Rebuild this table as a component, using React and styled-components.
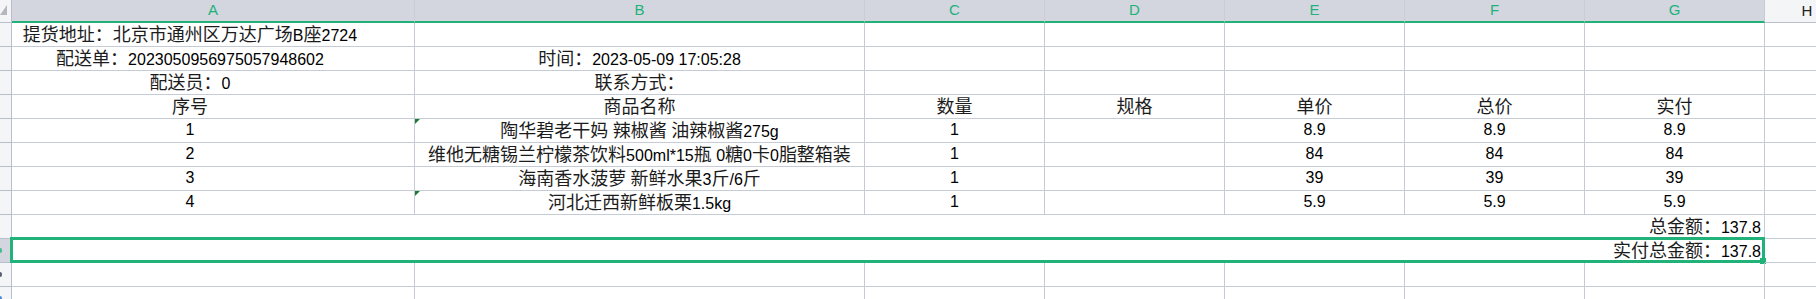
import React from 'react';
import styled, { createGlobalStyle, css } from 'styled-components';

const GlobalStyle = createGlobalStyle`
  html, body {
    margin: 0;
    padding: 0;
    background: #ffffff;
    overflow: hidden;
  }
  body {
    font-family: 'Liberation Sans', 'Noto Sans CJK SC', sans-serif;
    color: #000;
  }
`;

const GRID = '#c6cbd8';
const GREEN = '#21b27a';
const SELECT_BG = '#d3d6de';
const SIDE_BG = '#f4f5f7';

const letters = ['A', 'B', 'C', 'D', 'E', 'F', 'G', 'H'];

const info = [
  ['提货地址：北京市通州区万达广场B座2724', ''],
  ['配送单：2023050956975057948602', '时间：2023-05-09 17:05:28'],
  ['配送员：0', '联系方式：'],
];

const head = ['序号', '商品名称', '数量', '规格', '单价', '总价', '实付'];

const items = [
  { no: '1', name: '陶华碧老干妈 辣椒酱 油辣椒酱275g', qty: '1', spec: '', price: '8.9', total: '8.9', paid: '8.9', flag: true },
  { no: '2', name: '维他无糖锡兰柠檬茶饮料500ml*15瓶 0糖0卡0脂整箱装', qty: '1', spec: '', price: '84', total: '84', paid: '84' },
  { no: '3', name: '海南香水菠萝 新鲜水果3斤/6斤', qty: '1', spec: '', price: '39', total: '39', paid: '39' },
  { no: '4', name: '河北迁西新鲜板栗1.5kg', qty: '1', spec: '', price: '5.9', total: '5.9', paid: '5.9', flag: true },
];

// CJK runs get their own size so they sit like the sheet's Song font next to the Latin digits
const HAN_RE = /([\u3000-\u303f\u4e00-\u9fff\uff00-\uffef]+)/;

const Mixed = ({ text }) => (
  <Text>
    {text
      .split(HAN_RE)
      .filter(Boolean)
      .map((part, i) => (HAN_RE.test(part) ? <Han key={i}>{part}</Han> : <span key={i}>{part}</span>))}
  </Text>
);

const Cells = ({ values, flagB }) =>
  values.map((v, i) => (
    <Cell key={i} $first={i === 0}>
      {i === 1 && flagB && <Flag />}
      {v && <Mixed text={v} />}
    </Cell>
  ));

const App = () => {
  let row = 0;
  const next = () => ++row;

  return (
    <>
      <GlobalStyle />
      <Sheet>
        <Corner>
          <svg width="8" height="12" viewBox="0 0 8 12">
            <polygon points="7,1 7,11 0,11" fill="#b4b7bd" />
          </svg>
        </Corner>
        {letters.map((l) => (
          <ColHead key={l} $active={l !== 'H'}>
            {l}
          </ColHead>
        ))}

        {info.map((r) => {
          const n = next();
          return (
            <React.Fragment key={n}>
              <RowHead />
              <Cells values={[r[0], r[1], '', '', '', '', '']} />
              <Cell />
            </React.Fragment>
          );
        })}

        <RowHead />
        <Cells values={head} />
        <Cell />

        {items.map((it) => {
          const n = next();
          return (
            <React.Fragment key={n}>
              <RowHead />
              <Cells values={[it.no, it.name, it.qty, it.spec, it.price, it.total, it.paid]} flagB={it.flag} />
              <Cell />
            </React.Fragment>
          );
        })}

        <RowHead />
        <Merged>
          <Mixed text="总金额：137.8" />
        </Merged>
        <Cell />

        <RowHead $active>
          <Tick $color={GREEN} />
        </RowHead>
        <Merged>
          <Mixed text="实付总金额：137.8" />
          <Selection>
            <Handle />
          </Selection>
        </Merged>
        <Cell />

        {['#2f3a4d', '#2b6fd6'].map((c) => (
          <React.Fragment key={c}>
            <RowHead>
              <Tick $color={c} />
            </RowHead>
            <Cells values={['', '', '', '', '', '', '']} />
            <Cell />
          </React.Fragment>
        ))}
      </Sheet>
    </>
  );
};

export default App;

const Sheet = styled.div`
  width: 1816px;
  height: 299px;
  overflow: hidden;
  display: grid;
  grid-template-columns: 12px 403px 450px repeat(5, 180px) 84px;
  grid-template-rows: 23px;
  grid-auto-rows: 24px;
  font-size: 16px;
  line-height: 22px;
`;

const Text = styled.span`
  white-space: pre;
`;

const Han = styled.span`
  font-family: 'Noto Sans CJK SC', sans-serif;
  font-size: 18px;
  color: #1c1c1c;
`;

const Corner = styled.div`
  box-sizing: border-box;
  background: ${SIDE_BG};
  border-right: 1px solid #b9bfcc;
  border-bottom: 1px solid #b9bfcc;
  display: flex;
  align-items: flex-end;
  padding-bottom: 6px;
  overflow: hidden;
`;

const ColHead = styled.div`
  box-sizing: border-box;
  display: flex;
  align-items: center;
  justify-content: center;
  font-size: 15px;
  padding-bottom: 1px;
  ${({ $active }) =>
    $active
      ? css`
          background: ${SELECT_BG};
          color: ${GREEN};
          border-right: 1px solid #c9ccd3;
          border-bottom: 2px solid ${GREEN};
        `
      : css`
          background: ${SIDE_BG};
          color: #222;
          border-bottom: 1px solid #b9bfcc;
        `}
`;

const RowHead = styled.div`
  box-sizing: border-box;
  background: ${({ $active }) => ($active ? SELECT_BG : SIDE_BG)};
  border-right: 1px solid #b9bfcc;
  border-bottom: 1px solid #b9bfcc;
  display: flex;
  align-items: center;
`;

/* the row numbers sit scrolled off to the left; only a sliver of the last digit peeks in */
const Tick = styled.i`
  width: 2px;
  height: 5px;
  border-radius: 0 2px 2px 0;
  background: ${({ $color }) => $color};
  opacity: 0.8;
`;

const Cell = styled.div`
  position: relative;
  box-sizing: border-box;
  border-right: 1px solid ${GRID};
  border-bottom: 1px solid ${GRID};
  display: flex;
  align-items: center;
  justify-content: center;
  white-space: nowrap;
  padding-right: ${({ $first }) => ($first ? '46px' : '0')};
  padding-bottom: 1px;
`;

const Merged = styled(Cell)`
  grid-column: span 7;
  justify-content: flex-end;
  padding-right: 3px;
`;

const Flag = styled.i`
  position: absolute;
  top: 0;
  left: 0;
  width: 0;
  height: 0;
  border-top: 5px solid #1f7a32;
  border-right: 5px solid transparent;
`;

const Selection = styled.div`
  position: absolute;
  top: -2px;
  left: -2px;
  right: -1px;
  bottom: -1px;
  border: 3px solid ${GREEN};
  pointer-events: none;
`;

const Handle = styled.div`
  position: absolute;
  right: -5px;
  bottom: -5px;
  width: 6px;
  height: 6px;
  background: ${GREEN};
  border: 1px solid #fff;
  border-top: none;
  border-left: none;
`;
